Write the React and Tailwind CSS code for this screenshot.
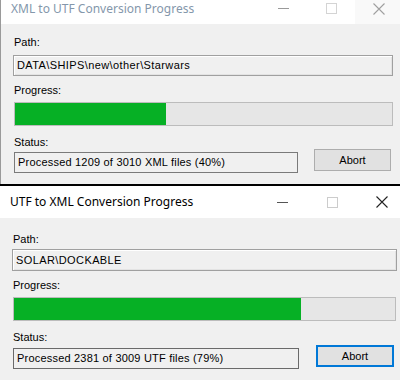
import React from "react";

const uiFont = { fontFamily: '"Liberation Sans", Arial, sans-serif' };
const titleFont = { fontFamily: '"Noto Sans", "Open Sans", sans-serif' };

function MinIcon({ color }) {
  return (
    <svg width="11" height="11" viewBox="0 0 11 11">
      <line x1="0" y1="5.5" x2="11" y2="5.5" stroke={color} strokeWidth="1" />
    </svg>
  );
}

function MaxIcon({ color }) {
  return (
    <svg width="11" height="11" viewBox="0 0 11 11">
      <rect x="0.5" y="0.5" width="10" height="10" fill="none" stroke={color} strokeWidth="1" />
    </svg>
  );
}

function CloseIcon({ color }) {
  return (
    <svg width="12" height="12" viewBox="0 0 12 12">
      <path d="M0.5 0.5 L11.5 11.5 M11.5 0.5 L0.5 11.5" stroke={color} strokeWidth="1.1" />
    </svg>
  );
}

function TitleBar({ title, active }) {
  if (!active) {
    return (
      <div className="h-[24px] bg-white flex items-center justify-between overflow-hidden">
        <span style={titleFont} className="pl-[10px] text-[12px] text-[#8497ab] -mt-[6px]">
          {title}
        </span>
        <div className="flex shrink-0 h-full mr-[-3px]">
          <div className="w-[48px] flex items-start pt-[3px] justify-center">
            <MinIcon color="#9a9a9a" />
          </div>
          <div className="w-[48px] flex items-start pt-[3px] justify-center">
            <MaxIcon color="#d4d4d4" />
          </div>
          <div className="w-[48px] flex items-start pt-[3px] justify-center bg-[#f9f9f9]">
            <CloseIcon color="#a0a0a0" />
          </div>
        </div>
      </div>
    );
  }
  return (
    <div className="h-[32px] bg-white flex items-center justify-between overflow-hidden">
      <span style={titleFont} className="pl-[10px] text-[12px] text-black">
        {title}
      </span>
      <div className="flex shrink-0 h-full mr-[-7px]">
        <div className="w-[50px] flex items-center justify-center">
          <MinIcon color="#555555" />
        </div>
        <div className="w-[50px] flex items-center justify-center">
          <MaxIcon color="#cccccc" />
        </div>
        <div className="w-[50px] flex items-center justify-center">
          <CloseIcon color="#222222" />
        </div>
      </div>
    </div>
  );
}

function Field({ text, width, height, mt }) {
  return (
    <div
      className={`${mt} ml-[12px] border border-[#a0a0a0] shadow-[inset_1px_1px_0_#ffffff,inset_-1px_-1px_0_#e3e3e3] flex items-center pl-[3px] tracking-[0.4px]`}
      style={{ width, height }}
    >
      {text}
    </div>
  );
}

function Bar({ width, fill, mt }) {
  return (
    <div
      className={`${mt} ml-[13px] h-[24px] border border-[#bcbcbc] bg-[#e6e6e6] flex`}
      style={{ width }}
    >
      <div className="h-full bg-[#06b025]" style={{ width: fill }} />
    </div>
  );
}

export default function App() {
  return (
    <div style={uiFont} className="w-[400px] h-[380px] overflow-hidden bg-white text-[11px] text-black">
      {/* XML to UTF (inactive window) */}
      <div className="h-[184px] border-l border-[#9a9a9a] flex flex-col">
        <TitleBar title="XML to UTF Conversion Progress" active={false} />
        <div className="flex-1 bg-[#f0f0f0] flex flex-col">
          <div className="mt-[12px] ml-[13px] leading-[13px]">Path:</div>
          <Field text={"DATA\\SHIPS\\new\\other\\Starwars"} width={380} height={21} mt="mt-[6px]" />
          <div className="mt-[8px] ml-[13px] leading-[13px]">Progress:</div>
          <Bar width={379} fill={151} mt="mt-[5px]" />
          <div className="mt-[10px] ml-[13px] leading-[13px]">Status:</div>
          <div className="flex items-start">
            <div className="mt-[3px] ml-[13px] w-[284px] h-[21px] border border-[#7a7a7a] flex items-center pl-[3px] tracking-[0.2px]">
              Processed 1209 of 3010 XML files (40%)
            </div>
            <div className="ml-[16px] w-[77px] h-[22px] bg-[#e1e1e1] border border-[#adadad] flex items-center justify-center">
              Abort
            </div>
          </div>
        </div>
      </div>

      <div className="h-[2px] bg-black" />

      {/* UTF to XML (active window) */}
      <div className="h-[194px] flex flex-col">
        <TitleBar title="UTF to XML Conversion Progress" active={true} />
        <div className="flex-1 bg-[#f0f0f0] flex flex-col">
          <div className="mt-[15px] ml-[13px] leading-[13px]">Path:</div>
          <Field text={"SOLAR\\DOCKABLE"} width={385} height={22} mt="mt-[3px]" />
          <div className="mt-[8px] ml-[13px] leading-[13px]">Progress:</div>
          <Bar width={383} fill={287} mt="mt-[5px]" />
          <div className="mt-[10px] ml-[13px] leading-[13px]">Status:</div>
          <div className="flex items-start">
            <div className="mt-[4px] ml-[13px] w-[286px] h-[21px] border border-[#6a6a6a] flex items-center pl-[3px] tracking-[0.2px]">
              Processed 2381 of 3009 UTF files (79%)
            </div>
            <div className="mt-[1px] ml-[17px] w-[78px] h-[22px] bg-[#e1e1e1] border-2 border-[#0078d7] flex items-center justify-center">
              Abort
            </div>
          </div>
        </div>
      </div>
    </div>
  );
}
